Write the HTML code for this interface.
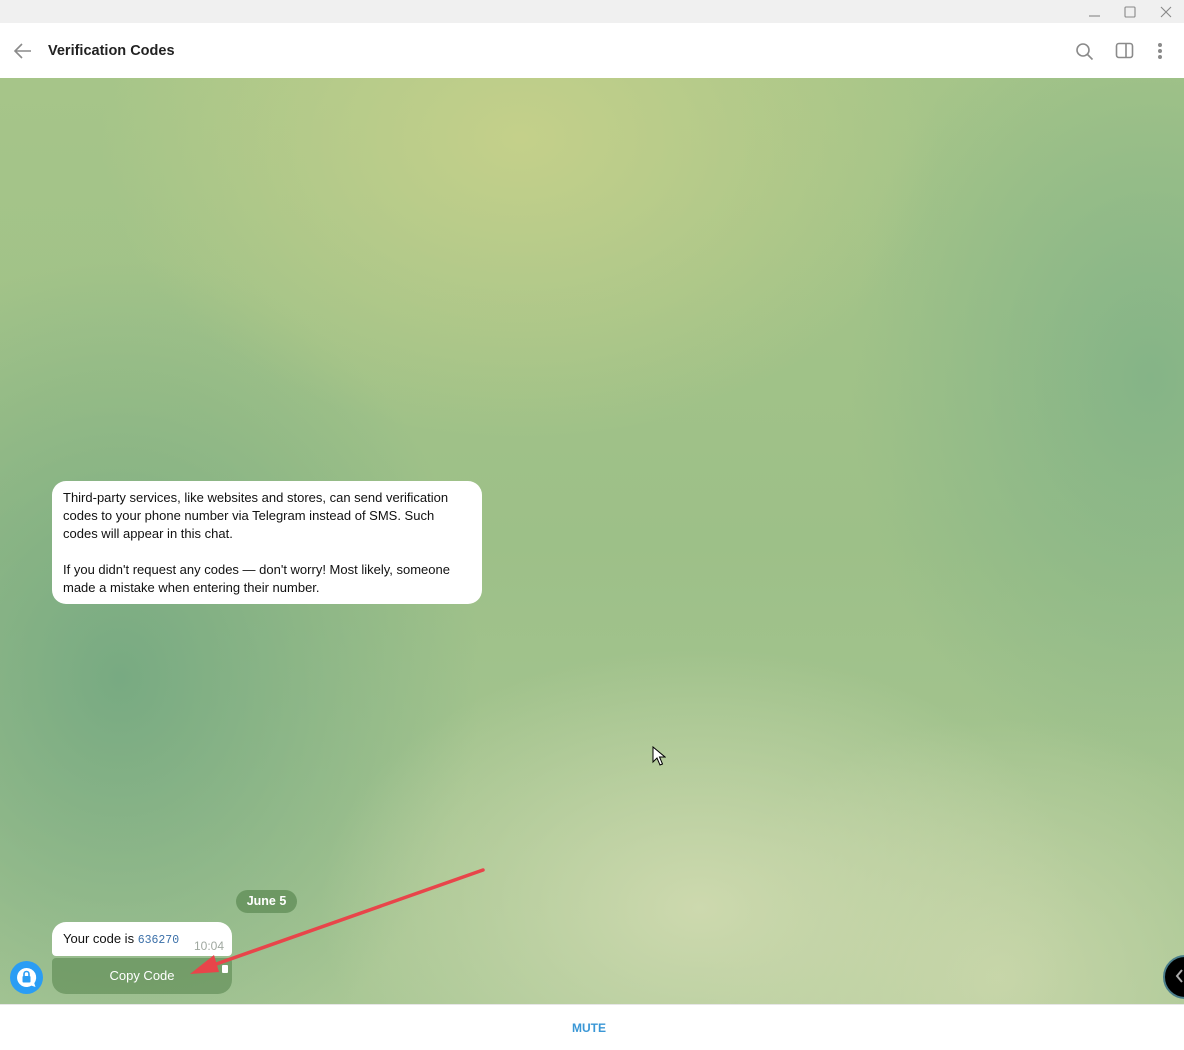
<!DOCTYPE html>
<html><head><meta charset="utf-8"><style>
*{margin:0;padding:0;box-sizing:border-box}
body{width:1184px;height:1050px;overflow:hidden;font-family:"Liberation Sans",sans-serif;background:#fff;position:relative}
.tb{position:absolute;top:0;left:0;width:1184px;height:23px;background:#f0f0f0}
.hdr{position:absolute;top:23px;left:0;width:1184px;height:55px;background:#fff}
.title{position:absolute;left:48px;top:20px;font-size:14.5px;font-weight:bold;color:#222}
.bg{position:absolute;top:78px;left:0;width:1184px;height:926px;
background:
radial-gradient(ellipse 420px 300px at 520px 60px,#c4d08a 0%,rgba(196,208,138,0) 100%),
radial-gradient(ellipse 380px 260px at 700px 830px,#cdd9ae 0%,rgba(205,217,174,0) 100%),
radial-gradient(ellipse 300px 260px at 1000px 900px,#c6d5a8 0%,rgba(198,213,168,0) 100%),
radial-gradient(ellipse 360px 420px at 120px 600px,#78aa82 0%,rgba(120,170,130,0) 100%),
radial-gradient(ellipse 300px 400px at 1150px 300px,#85b487 0%,rgba(133,180,135,0) 100%),
linear-gradient(180deg,#a6c589 0%,#9dc088 50%,#a9c795 100%);}
.bubble{position:absolute;background:#fff;border-radius:14px;color:#111;font-size:13px;line-height:18px}
.b1{left:52px;top:481px;width:430px;height:123px;padding:8px 11px;white-space:nowrap}
.date{position:absolute;left:236px;top:890px;width:61px;height:23px;border-radius:12px;background:rgba(95,140,85,.75);color:#fff;font-size:12.5px;font-weight:bold;text-align:center;line-height:23px}
.b2{left:52px;top:922px;width:180px;height:34px;padding:8px 11px;border-radius:14px 14px 4px 4px}
.time{position:absolute;right:8px;top:15px;font-size:12px;color:#a0a8a0}
.copy{position:absolute;left:52px;top:958px;width:180px;height:36px;border-radius:4px 4px 14px 14px;background:rgba(90,135,80,.6);color:#fff;font-size:13px;text-align:center;line-height:36px}
.avatar{position:absolute;left:10px;top:961px;width:33px;height:33px;border-radius:50%;background:#2a9df4}
.foot{position:absolute;top:1004px;left:0;width:1184px;height:46px;background:#fff;border-top:1px solid #e6e6e6}
.mute{position:absolute;left:572px;top:16px;font-size:12px;font-weight:bold;color:#3a97d6}
</style></head><body>
<div class="tb">
<svg style="position:absolute;left:1088px;top:5px" width="90" height="14" viewBox="0 0 90 14" fill="none" stroke="#888" stroke-width="1.1">
<path d="M1 11H12"/><rect x="37" y="2" width="10" height="10" rx="1"/><path d="M73 2L83 12M83 2L73 12"/></svg>
</div>
<div class="hdr">
<svg style="position:absolute;left:13px;top:19px" width="20" height="18" viewBox="0 0 20 18" fill="none" stroke="#8a8a8a" stroke-width="1.6"><path d="M18 9H3M9 2L2 9L9 16"/></svg>
<div class="title">Verification Codes</div>
<svg style="position:absolute;left:1075px;top:19px" width="20" height="20" viewBox="0 0 20 20" fill="none" stroke="#8a8a8a" stroke-width="1.6"><circle cx="8" cy="8" r="6"/><path d="M12.5 12.5L17.5 17.5"/></svg>
<svg style="position:absolute;left:1115px;top:19px" width="20" height="18" viewBox="0 0 20 18" fill="none" stroke="#8a8a8a" stroke-width="1.6"><rect x="1.5" y="1.5" width="16" height="14" rx="2.5"/><path d="M11 1.5V15.5"/></svg>
<svg style="position:absolute;left:1155px;top:19px" width="10" height="18" viewBox="0 0 10 18" fill="#8a8a8a"><circle cx="5" cy="3" r="2"/><circle cx="5" cy="9" r="2"/><circle cx="5" cy="15" r="2"/></svg>
</div>
<div class="bg"></div>
<div class="bubble b1">Third-party services, like websites and stores, can send verification<br>codes to your phone number via Telegram instead of SMS. Such<br>codes will appear in this chat.<br><br>If you didn't request any codes — don't worry! Most likely, someone<br>made a mistake when entering their number.</div>
<div class="date">June 5</div>
<div class="bubble b2">Your code is <span style="font-family:'Liberation Mono',monospace;font-size:11.5px;color:#3a6fa8">636270</span><span class="time">10:04</span></div>
<div class="copy">Copy Code</div>
<div style="position:absolute;left:222px;top:965px;width:6px;height:8px;background:#fff;border-radius:1px"></div>
<div class="avatar"><svg width="33" height="33" viewBox="0 0 33 33"><path d="M16.5 7a9.5 9.5 0 1 0 5 17.6l4 1.4-1.2-3.8A9.5 9.5 0 0 0 16.5 7z" fill="#fff"/><rect x="12.5" y="15" width="8" height="6.5" rx="1" fill="#2a9df4"/><path d="M14 15v-2a2.5 2.5 0 0 1 5 0v2" stroke="#2a9df4" stroke-width="1.6" fill="none"/></svg></div>
<svg style="position:absolute;left:185px;top:865px" width="305" height="115" viewBox="185 865 305 115"><path d="M483 870L205 968" stroke="#e8454a" stroke-width="3.5" stroke-linecap="round"/><path d="M190 974L214 955L219 972Z" fill="#e8454a"/></svg>
<svg style="position:absolute;left:652px;top:746px" width="14" height="20" viewBox="0 0 14 20"><path d="M1 1V16L5 12L8 19L10.5 18L7.5 11H13Z" fill="#fff" stroke="#000" stroke-width="1"/></svg>
<div style="position:absolute;left:1163px;top:955px;width:44px;height:44px;border-radius:50%;background:#000;border:2px solid #4a7d8a"></div>
<svg style="position:absolute;left:1174px;top:968px" width="10" height="16" viewBox="0 0 10 16" fill="none" stroke="#aaa" stroke-width="2"><path d="M8 2L3 8L8 14"/></svg>
<div class="foot"><div class="mute">MUTE</div></div>
</body></html>
